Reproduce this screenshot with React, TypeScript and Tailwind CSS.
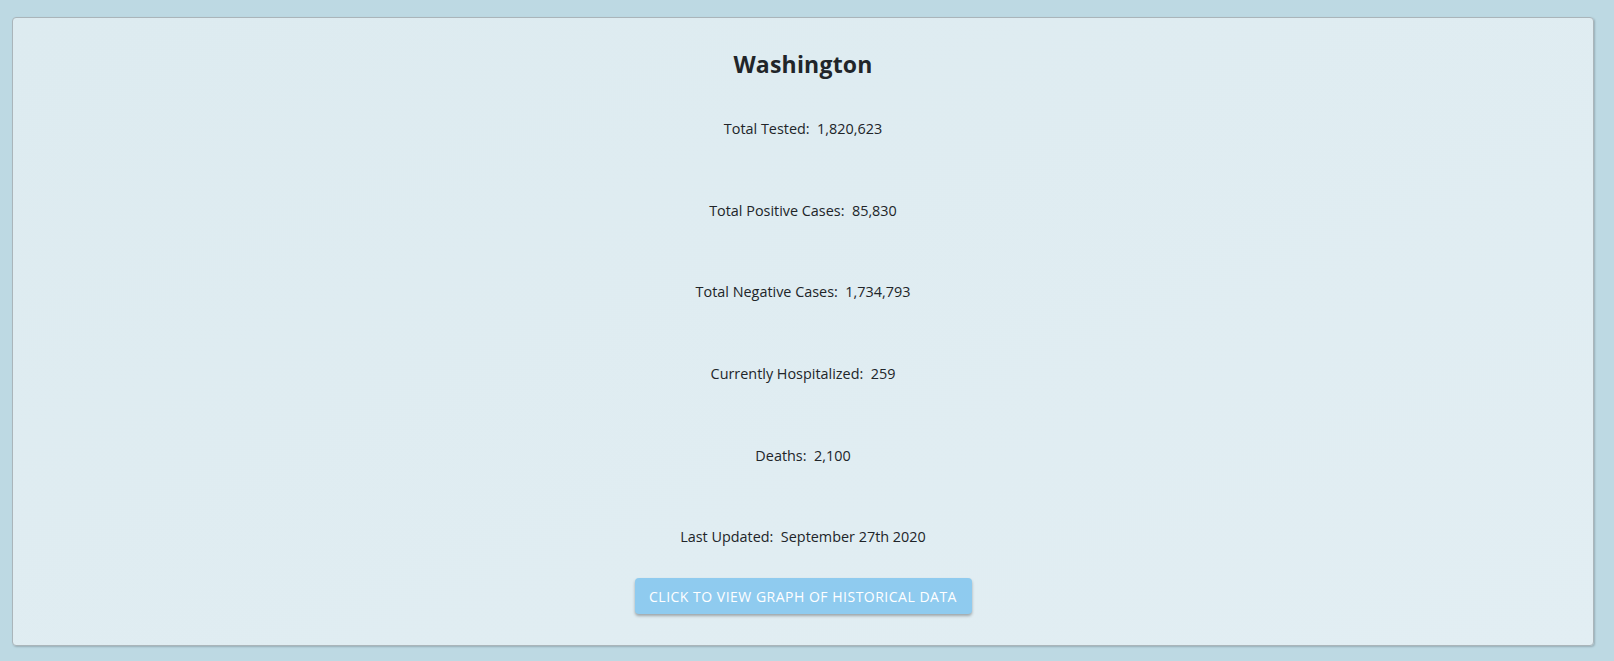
import * as React from 'react'

const stats = [
    { label: 'Total Tested', value: '1,820,623' },
    { label: 'Total Positive Cases', value: '85,830' },
    { label: 'Total Negative Cases', value: '1,734,793' },
    { label: 'Currently Hospitalized', value: '259' },
    { label: 'Deaths', value: '2,100' },
    { label: 'Last Updated', value: 'September 27th 2020' },
]

const App = () => {
    return (
        <div
            className="w-full min-h-screen bg-[#bdd9e3] pl-3 pr-5 pt-[17px] pb-4"
            style={{ fontFamily: '"Open Sans", "Noto Sans", sans-serif' }}
        >
            <div className="flex flex-col items-center rounded border border-[#aab5ba] bg-gradient-to-br from-[#ddebf0] to-[#e2eef3] pt-[30px] pb-[31px] shadow-[1px_1px_2px_rgba(0,0,0,0.2)] text-[#212529]">
                <h1 className="text-[23px] leading-[32px] font-bold tracking-[0.2px]">Washington</h1>
                <div className="mt-[37px] flex flex-col items-center gap-[57.7px]">
                    {stats.map((s) => (
                        <div key={s.label} className="text-[14.4px] leading-[24px] whitespace-pre">
                            {s.label}:{'  '}{s.value}
                        </div>
                    ))}
                </div>
                <button className="mt-[29px] h-[36px] w-[337px] rounded bg-[#8fcbef] text-[14px] uppercase tracking-[0.5px] text-white shadow-[0_2px_3px_rgba(0,0,0,0.3)]">
                    Click to view graph of historical data
                </button>
            </div>
        </div>
    )
}

export default App
